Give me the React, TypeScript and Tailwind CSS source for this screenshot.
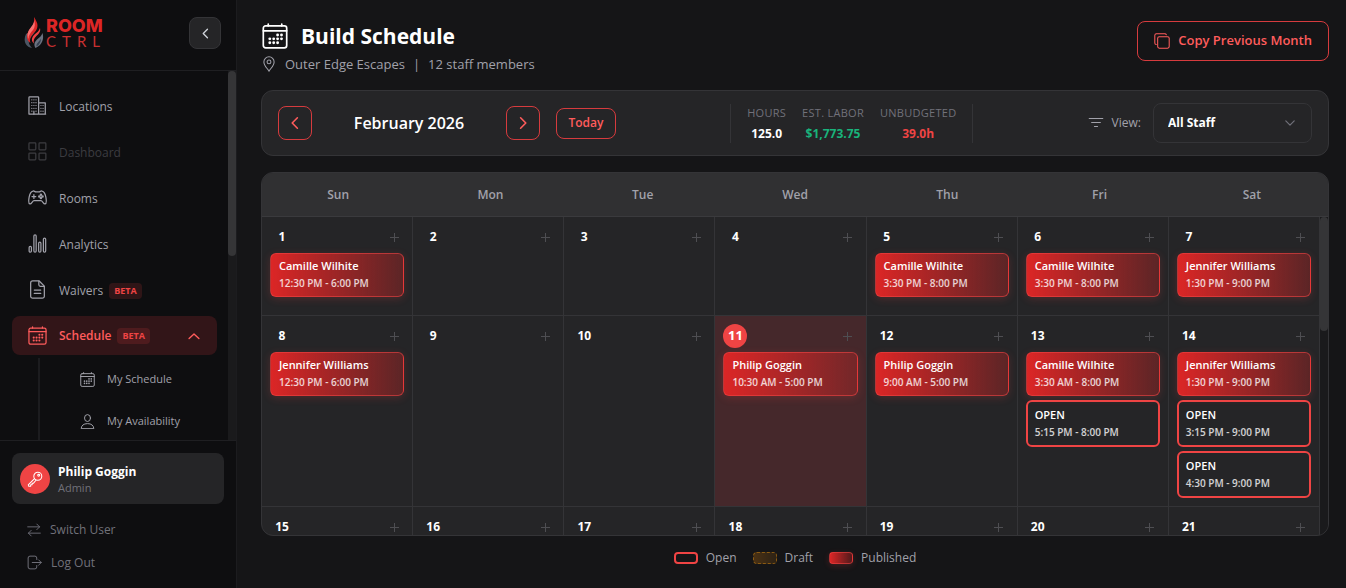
import React, { useState } from 'react';
import clsx from 'clsx';

interface Shift {
  name: string;
  time: string;
  open?: boolean;
}

interface NavItem {
  label: string;
  icon: React.ReactNode;
  disabled?: boolean;
  beta?: boolean;
}

const weekdays = ['Sun', 'Mon', 'Tue', 'Wed', 'Thu', 'Fri', 'Sat'];

const TODAY = 11;

// Mock schedule - Replace with API call
const shifts: Record<number, Shift[]> = {
  1: [{ name: 'Camille Wilhite', time: '12:30 PM - 6:00 PM' }],
  5: [{ name: 'Camille Wilhite', time: '3:30 PM - 8:00 PM' }],
  6: [{ name: 'Camille Wilhite', time: '3:30 PM - 8:00 PM' }],
  7: [{ name: 'Jennifer Williams', time: '1:30 PM - 9:00 PM' }],
  8: [{ name: 'Jennifer Williams', time: '12:30 PM - 6:00 PM' }],
  11: [{ name: 'Philip Goggin', time: '10:30 AM - 5:00 PM' }],
  12: [{ name: 'Philip Goggin', time: '9:00 AM - 5:00 PM' }],
  13: [
    { name: 'Camille Wilhite', time: '3:30 AM - 8:00 PM' },
    { name: 'OPEN', time: '5:15 PM - 8:00 PM', open: true },
  ],
  14: [
    { name: 'Jennifer Williams', time: '1:30 PM - 9:00 PM' },
    { name: 'OPEN', time: '3:15 PM - 9:00 PM', open: true },
    { name: 'OPEN', time: '4:30 PM - 9:00 PM', open: true },
  ],
};

const stats = [
  { label: 'Hours', value: '125.0', color: 'text-white' },
  { label: 'Est. Labor', value: '$1,773.75', color: 'text-[#19b37b]' },
  { label: 'Unbudgeted', value: '39.0h', color: 'text-[#ef4444]' },
];

function Icon({ className, children }: { className?: string; children: React.ReactNode }) {
  return (
    <svg
      viewBox="0 0 20 20"
      className={clsx('shrink-0', className)}
      fill="none"
      stroke="currentColor"
      strokeWidth="1.3"
      strokeLinecap="round"
      strokeLinejoin="round"
      aria-hidden="true"
    >
      {children}
    </svg>
  );
}

function CalendarIcon({ className }: { className?: string }) {
  const dots = [
    [12, 9.2], [15, 9.2],
    [6, 12.2], [9, 12.2], [12, 12.2], [15, 12.2],
    [6, 15.2], [9, 15.2], [12, 15.2],
  ];
  return (
    <Icon className={className}>
      <rect x="1" y="2.2" width="18" height="17" rx="1.8" />
      <path d="M1 6h18M4.800 .8v1.400M15.200 .8v1.400" />
      {dots.map(([x, y]) => (
        <circle key={`${x}-${y}`} cx={x} cy={y} r="1.1" fill="currentColor" stroke="none" />
      ))}
    </Icon>
  );
}

function BuildingIcon({ className }: { className?: string }) {
  return (
    <Icon className={className}>
      <path d="M1 19V1.600c0-.5.3-.8.8-.8h8.600c.5 0 .8.3.8.8V19M11.200 7.200h7V19M1 19h17.600" />
      <path d="M4 4h.1M6.200 4h.1M8.400 4h.1M4 7h.1M6.200 7h.1M8.400 7h.1M4 10h.1M6.200 10h.1M8.400 10h.1M4 13h.1M6.200 13h.1M8.400 13h.1M13.600 10h.1M15.800 10h.1M13.600 13h.1M15.800 13h.1M13.600 16h.1M15.800 16h.1M4 16h.1M6.200 16v3M8.400 16h.1" />
    </Icon>
  );
}

function GridIcon({ className }: { className?: string }) {
  return (
    <Icon className={className}>
      <rect x="1" y="1" width="7.200" height="7.200" rx=".8" />
      <rect x="11.600" y="1" width="7.200" height="7.200" rx=".8" />
      <rect x="1" y="11.600" width="7.200" height="7.200" rx=".8" />
      <rect x="11.600" y="11.600" width="7.200" height="7.200" rx=".8" />
    </Icon>
  );
}

function GamepadIcon({ className }: { className?: string }) {
  return (
    <Icon className={className}>
      <path d="M5.200 3.200C6.600 2.800 7 4 8.200 4h3.600c1.200 0 1.600-1.200 3-.8 2.400.6 3.400 3 4 6.400.6 3.400.8 6.800-.8 7.200-1.800.4-2.600-3.400-4.400-3.400H6.400c-1.800 0-2.600 3.800-4.400 3.400-1.600-.4-1.400-3.800-.8-7.200.6-3.400 1.600-5.800 4-6.400z" />
      <path d="M6.200 7v4M4.200 9h4" />
      <circle cx="13.600" cy="7.200" r=".7" />
      <circle cx="13.600" cy="10.600" r=".7" />
      <circle cx="11.900" cy="8.900" r=".7" />
      <circle cx="15.300" cy="8.900" r=".7" />
    </Icon>
  );
}

function BarsIcon({ className }: { className?: string }) {
  return (
    <Icon className={className}>
      <rect x="1.200" y="13" width="2.400" height="6.200" rx="1.200" />
      <rect x="6.200" y="1" width="2.400" height="18.200" rx="1.200" />
      <rect x="11.200" y="8.600" width="2.400" height="10.600" rx="1.200" />
      <rect x="16.200" y="4.400" width="2.400" height="14.800" rx="1.200" />
    </Icon>
  );
}

function DocumentIcon({ className }: { className?: string }) {
  return (
    <Icon className={className}>
      <path d="M5 1h6.800l5.400 5.400V17a2.200 2.200 0 0 1-2.200 2.200H5A2.200 2.200 0 0 1 2.800 17V3.200A2.200 2.200 0 0 1 5 1z" />
      <path d="M11.400 1.200v3.800c0 1 .6 1.600 1.600 1.600h4M6.600 10.600h6.800M6.600 14.200h6.800" />
    </Icon>
  );
}

function PersonIcon({ className }: { className?: string }) {
  return (
    <Icon className={className}>
      <ellipse cx="10" cy="5.400" rx="4" ry="4.600" />
      <path d="M1.600 19c.2-3.600 3.200-6.200 8.400-6.200s8.200 2.600 8.400 6.200z" />
    </Icon>
  );
}

function Chevron({ className, dir }: { className?: string; dir: 'left' | 'right' | 'up' | 'down' }) {
  const paths = {
    left: 'M13 3.500 6.500 10l6.500 6.500',
    right: 'M7 3.500 13.500 10 7 16.500',
    up: 'M3 13.500 10 7l7 6.500',
    down: 'M3 6.500 10 13.500l7-7',
  };
  return (
    <svg
      viewBox="0 0 20 20"
      className={clsx('shrink-0', className)}
      fill="none"
      stroke="currentColor"
      strokeWidth="2"
      strokeLinecap="round"
      strokeLinejoin="round"
      aria-hidden="true"
    >
      <path d={paths[dir]} />
    </svg>
  );
}

function Logo() {
  return (
    <a href="#" aria-label="Room Ctrl" className="flex items-center gap-[2px]">
      <svg viewBox="0 0 20 32" className="w-5 h-8" aria-hidden="true">
        <path d="M2 17C-1 23 1 29.500 8 31c-4-4-4-7-1-11 3-3.500 5-6 4.500-9C9 14 4.500 15.500 2 17z" fill="#4b5563" />
        <path d="M10 0c2.500 4.500 4.500 7 3 11.500-1.200 3.500-5 5.500-6.500 9.500-.8 2-.6 3.500 0 5C3.500 24 2 20.500 3.500 16.500 5 12 11.500 8.500 10 0z" fill="#dc2626" />
        <path d="M10 2.500c.8 4.500-3.500 7.500-5.500 11.500C3 17.500 3.500 20 4.500 22c0-4 2-6 4.500-9 2-2.500 2.500-6 1-10.500z" fill="#f87171" />
        <path d="M16 11c1 4-1.500 6-4 8.500-2 2-3 4-2 7C6.500 23.500 8 20 10.500 17.500 13 15.500 15 14 16 11z" fill="#ef4444" />
        <path d="M18.500 16c1.500 5 .5 11.500-7 15-2-3.500-1-6 1.500-8.500 2.500-2 4.500-3.500 5.500-6.500z" fill="#6b7280" />
        <path d="M17 21.500c0 3.500-1.500 6-4.500 8 -.5-3 2.500-4.500 4.500-8z" fill="#374151" />
      </svg>
      <span className="flex flex-col">
        <span className="font-[Inter] font-extrabold text-[18px] leading-[17px] text-[#dc2626]">ROOM</span>
        <span className="font-[Lato] text-[15px] leading-[15px] tracking-[6px] text-[#c93030]">CTRL</span>
      </span>
    </a>
  );
}

function BetaBadge() {
  return (
    <span className="px-[5px] h-4 leading-4 rounded bg-[#ef4444]/15 text-[9px] font-bold text-[#ef4444]">BETA</span>
  );
}

const navItems: NavItem[] = [
  { label: 'Locations', icon: <BuildingIcon className="w-[19px] h-[19px]" /> },
  { label: 'Dashboard', icon: <GridIcon className="w-[19px] h-[19px]" />, disabled: true },
  { label: 'Rooms', icon: <GamepadIcon className="w-[19px] h-[19px]" /> },
  { label: 'Analytics', icon: <BarsIcon className="w-[19px] h-[19px]" /> },
  { label: 'Waivers', icon: <DocumentIcon className="w-[19px] h-[19px]" />, beta: true },
];

function Sidebar() {
  const [expanded, setExpanded] = useState(true);

  return (
    <aside className="w-[237px] shrink-0 flex flex-col bg-[#0e0e10] border-r border-[#1c1c1f]">
      {/* Brand */}
      <div className="h-[71px] shrink-0 flex items-center justify-between pl-6 pr-[15px] pb-1 border-b border-[#1f1f22]">
        <Logo />
        <button
          aria-label="Collapse sidebar"
          className="w-8 h-8 rounded-lg border border-[#343437] bg-[#252527] text-gray-300 flex items-center justify-center"
        >
          <Chevron dir="left" className="w-[13px] h-[13px]" />
        </button>
      </div>

      {/* Navigation */}
      <div className="flex-1 min-h-0 flex overflow-hidden">
        <nav className="flex-1 px-3 pt-[14px] overflow-hidden">
          <ul className="flex flex-col">
            {navItems.map((item) => (
              <li key={item.label}>
                <a
                  href="#"
                  className={clsx(
                    'h-[46px] flex items-center px-4 pb-[6px] pt-1 text-[12px]',
                    item.disabled ? 'text-[#3c3c40]' : 'text-[#a1a1aa]'
                  )}
                >
                  <span className="w-[19px] mb-1 mr-3">{item.icon}</span>
                  <span className="mr-[6px]">{item.label}</span>
                  {item.beta && <BetaBadge />}
                </a>
              </li>
            ))}
            <li className="mt-px">
              <button
                onClick={() => setExpanded(!expanded)}
                aria-expanded={expanded}
                className="w-[205px] h-[39px] flex items-center px-4 rounded-lg bg-[#321518] text-[12px] font-semibold text-[#ff5c5c]"
              >
                <CalendarIcon className="w-[19px] h-[19px] mr-3" />
                <span className="mr-[6px]">Schedule</span>
                <BetaBadge />
                <Chevron dir="up" className="w-[14px] h-[14px] ml-auto" />
              </button>
              {expanded && (
                <ul className="ml-[26px] mt-[3px] border-l-2 border-[#1c1c1f] text-[11px] text-[#a1a1aa]">
                  <li>
                    <a href="#" className="h-[42px] flex items-center gap-3 pl-10">
                      <CalendarIcon className="w-[15px] h-[15px]" />
                      My Schedule
                    </a>
                  </li>
                  <li>
                    <a href="#" className="h-[42px] flex items-center gap-3 pl-10">
                      <PersonIcon className="w-[15px] h-[15px]" />
                      My Availability
                    </a>
                  </li>
                </ul>
              )}
            </li>
          </ul>
        </nav>
        <div className="w-2 bg-[#1a1a1c]">
          <div className="h-1/2 rounded-full bg-[#353537]" />
        </div>
      </div>

      {/* Current user */}
      <div className="shrink-0 border-t border-[#1f1f22] px-3 pt-3 pb-[9px]">
        <div className="h-[51px] flex items-center gap-2 px-2 rounded-lg bg-[#252527]">
          <span className="w-[30px] h-[30px] rounded-full bg-[#ef4444] text-white flex items-center justify-center">
            <Icon className="w-4 h-4">
              <circle cx="13.500" cy="6.500" r="5" />
              <circle cx="14.600" cy="5.400" r="1.200" />
              <path d="M9.400 9.600 1.600 17.400l.6 1.600h2.400v-1.800h1.800v-2h1.800l3-3.600" />
            </Icon>
          </span>
          <span className="flex flex-col">
            <span className="text-[12px] leading-[18px] font-bold text-white">Philip Goggin</span>
            <span className="text-[11px] leading-[14px] text-[#71717a]">Admin</span>
          </span>
        </div>
        <div className="mt-[9px] px-[15px] flex flex-col text-[12px] text-[#71717a]">
          <button className="h-[33px] flex items-center gap-[9px]">
            <Icon className="w-[14px] h-[14px]">
              <path d="M1 5.500h17M14 1.500l4 4-4 4M19 14.500H2M6 10.500l-4 4 4 4" />
            </Icon>
            Switch User
          </button>
          <button className="h-[33px] flex items-center gap-[9px]">
            <Icon className="w-[15px] h-[15px]">
              <path d="M13 6V4a2.500 2.500 0 0 0-2.500-2.500H4A2.500 2.500 0 0 0 1.500 4v12A2.500 2.500 0 0 0 4 18.500h6.500A2.500 2.500 0 0 0 13 16v-2M7 10h12M15.500 6.500 19 10l-3.500 3.500" />
            </Icon>
            Log Out
          </button>
        </div>
      </div>
    </aside>
  );
}

function ShiftCard({ shift }: { shift: Shift }) {
  return (
    <button
      className={clsx(
        'w-full rounded-md text-left text-[11px] leading-4 font-semibold',
        shift.open
          ? 'border-2 border-[#ef4444] px-[7px] py-[5px]'
          : 'border border-[#ef4444]/60 bg-linear-to-r from-[#dc2626] to-[#dc2626]/30 px-2 pt-[4px] pb-[5px] shadow-[0_2px_8px_rgba(239,68,68,0.2)]'
      )}
    >
      <span className="block text-white">{shift.name}</span>
      <span className="block mt-px text-[10px] text-white/80">{shift.time}</span>
    </button>
  );
}

function DayCell({ day }: { day: number }) {
  const isToday = day === TODAY;
  return (
    <div
      className={clsx(
        'min-h-[99px] p-2 flex flex-col gap-1 border-r border-b border-[#343437]',
        isToday && 'bg-[#45282b]'
      )}
    >
      <div className="h-6 flex items-center justify-between">
        <span
          className={clsx(
            'w-6 h-6 rounded-full flex items-center justify-center font-bold text-white',
            isToday ? 'bg-[#ef4444] text-[13px]' : 'text-[12px]'
          )}
        >
          {day}
        </span>
        <button aria-label={`Add shift on February ${day}`} className="w-5 h-5 flex items-center justify-center text-[#4e4e52]">
          <svg viewBox="0 0 9 9" className="w-[9px] h-[9px]" stroke="currentColor" aria-hidden="true">
            <path d="M4.500 0v9M0 4.500h9" />
          </svg>
        </button>
      </div>
      {(shifts[day] || []).map((shift) => (
        <ShiftCard key={shift.time} shift={shift} />
      ))}
    </div>
  );
}

export default function App() {
  const [view, setView] = useState('All Staff');
  const days = Array.from({ length: 28 }, (_, i) => i + 1);

  return (
    <div className="h-screen flex overflow-hidden bg-[#151517] font-['Open_Sans',sans-serif]">
      <Sidebar />

      <main className="flex-1 min-w-0 flex flex-col pl-6 pr-[17px] pt-[21px]">
        {/* Page Header */}
        <header className="flex items-start justify-between mb-[13px]">
          <div>
            <h1 className="flex items-center gap-3 text-[21px] leading-[30px] font-bold text-white">
              <span className="w-7 flex justify-center">
                <CalendarIcon className="w-[26px] h-[26px]" />
              </span>
              Build Schedule
            </h1>
            <p className="flex items-center text-[13px] leading-[26px] text-[#a1a1aa]">
              <Icon className="w-4 h-4 mr-2">
                <path d="M10 1a6.400 6.400 0 0 1 6.400 6.400C16.400 12 12 15.500 10 19 8 15.500 3.600 12 3.600 7.400A6.400 6.400 0 0 1 10 1z" />
                <circle cx="10" cy="7.400" r="2.400" />
              </Icon>
              Outer Edge Escapes
              <span className="mx-2">|</span>
              12 staff members
            </p>
          </div>
          <button className="h-10 px-4 flex items-center gap-2 rounded-lg border border-[#d63b3e] text-[13px] font-semibold text-[#ff5c5c]">
            <Icon className="w-4 h-4">
              <rect x="4.600" y="4.600" width="14.400" height="14.400" rx="2" />
              <path d="M2.800 14.500A2 2 0 0 1 1 12.600V3a2 2 0 0 1 2-2h10.600a2 2 0 0 1 1.800 1.200" />
            </Icon>
            Copy Previous Month
          </button>
        </header>

        {/* Toolbar */}
        <section className="h-[66px] shrink-0 mb-4 px-4 flex items-center justify-between rounded-xl border border-[#343437] bg-[#252527]">
          <div className="flex items-center gap-4 text-[#ff5c5c]">
            <button aria-label="Previous month" className="w-[34px] h-[34px] flex items-center justify-center rounded-lg border border-[#d63b3e]">
              <Chevron dir="left" className="w-4 h-4" />
            </button>
            <h2 className="w-[162px] text-center text-base font-semibold text-white">February 2026</h2>
            <button aria-label="Next month" className="w-[34px] h-[34px] flex items-center justify-center rounded-lg border border-[#d63b3e]">
              <Chevron dir="right" className="w-4 h-4" />
            </button>
            <button className="w-[60px] h-[31px] rounded-lg border border-[#d63b3e] text-[12px] font-semibold">Today</button>
          </div>

          <dl className="flex gap-4 px-4 border-x border-[#343437] text-center">
            {stats.map((stat) => (
              <div key={stat.label}>
                <dt className="text-[11px] leading-[17px] uppercase tracking-wide text-[#71717a]">{stat.label}</dt>
                <dd className={clsx('mt-[3px] text-[12px] leading-[19px] font-bold', stat.color)}>{stat.value}</dd>
              </div>
            ))}
          </dl>

          <div className="flex items-center text-[#a1a1aa]">
            <Icon className="w-4 h-4 mr-2">
              <path d="M1.500 4.500h17M4.500 9.500h11M8 14.500h4" />
            </Icon>
            <label htmlFor="view" className="mr-3 text-[12px]">View:</label>
            <div className="relative">
              <select
                id="view"
                value={view}
                onChange={(e) => setView(e.target.value)}
                className="w-[159px] h-10 pl-[14px] block appearance-none rounded-lg border border-[#343437] bg-[#252527] text-[12px] font-bold text-white"
              >
                <option>All Staff</option>
                <option>Philip Goggin</option>
                <option>Camille Wilhite</option>
                <option>Jennifer Williams</option>
              </select>
              <Chevron dir="down" className="absolute right-4 top-3.5 w-3 h-3 text-[#71717a] pointer-events-none" />
            </div>
          </div>
        </section>

        {/* Calendar */}
        <section className="flex-1 min-h-0 flex flex-col overflow-hidden rounded-xl border border-[#343437] bg-[#252527]">
          <div className="h-11 shrink-0 grid grid-cols-7 items-center border-b border-[#3a3a3d] bg-[#303032] text-center text-[12px] font-semibold text-[#a1a1aa]">
            {weekdays.map((weekday) => (
              <span key={weekday}>{weekday}</span>
            ))}
          </div>
          <div className="flex-1 min-h-0 flex overflow-hidden">
            <div className="flex-1 self-start grid grid-cols-7">
              {days.map((day) => (
                <DayCell key={day} day={day} />
              ))}
            </div>
            <div className="w-2 bg-[#1a1a1c]">
              <div className="h-[36%] rounded-full bg-[#353537]" />
            </div>
          </div>
        </section>

        {/* Legend */}
        <footer className="h-[52px] shrink-0 pb-2 flex items-center justify-center gap-4 text-[12px] text-[#a1a1aa]">
          <span className="flex items-center gap-2">
            <i className="w-6 h-3 rounded border-2 border-[#ef4444]" />
            Open
          </span>
          <span className="flex items-center gap-2">
            <i className="w-6 h-3 rounded border border-dashed border-[#8a5a12] bg-linear-to-r from-[#4a3113] to-[#2d2215]" />
            Draft
          </span>
          <span className="flex items-center gap-2">
            <i className="w-6 h-3 rounded border border-[#ef4444]/60 bg-linear-to-r from-[#dc2626] to-[#dc2626]/30 shadow-[0_2px_6px_rgba(239,68,68,0.2)]" />
            Published
          </span>
        </footer>
      </main>
    </div>
  );
}
